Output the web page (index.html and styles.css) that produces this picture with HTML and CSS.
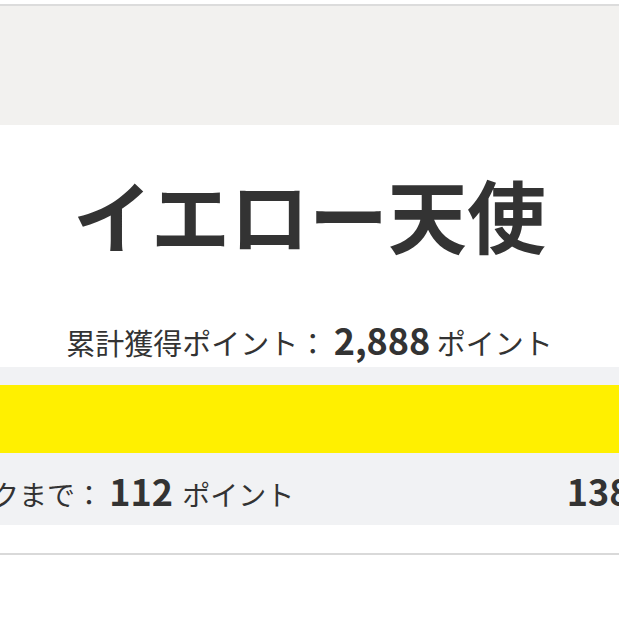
FILE: index.html
```html
<!DOCTYPE html>
<html lang="ja">
<head>
<meta charset="utf-8">
<link rel="stylesheet" href="styles.css">
</head>
<body>
<div class="page">
  <div class="hero"></div>
  <section class="card">
    <h1 class="title">イエロー天使</h1>
    <p class="total">累計獲得ポイント： <strong class="num">2,888</strong> ポイント</p>
  </section>
  <section class="progress">
    <div class="bar"><div class="fill" style="width:100%"></div></div>
    <div class="row">
      <span class="label">次のランクまで： <strong class="num">112</strong> <span class="unit">ポイント</span></span>
      <span class="label next"><strong class="num">1388</strong> <span class="unit">ポイント</span></span>
    </div>
  </section>
  <div class="gap"></div>
  <hr class="rule">
</div>
</body>
</html>
```
FILE: styles.css
```css
html, body {
  margin: 0;
  padding: 0;
  background: #ffffff;
  overflow: hidden;
}
body {
  font-family: "Noto Sans CJK JP", "Noto Sans", sans-serif;
  color: #333333;
}
.page {
  width: 861px;
  margin-left: -121px;
}
.hero {
  margin-top: 4px;
  height: 119px;
  border-top: 2px solid #dcdcdc;
  background: #f2f1ef;
}
.card {
  padding-top: 42px;
  text-align: center;
}
.title {
  margin: 0;
  font-size: 79px;
  line-height: 94px;
  font-weight: 700;
  color: #333333;
}
.total {
  margin: 58px 0 0;
  font-size: 29px;
  line-height: 40px;
  height: 40px;
  font-weight: 400;
}
.num {
  font-size: 36px;
  font-weight: 700;
  line-height: 40px;
}
.progress {
  margin-top: 8px;
  background: #f1f2f4;
  padding: 18px 0 15px;
}
.bar {
  height: 68px;
}
.fill {
  height: 100%;
  background: #fff000;
}
.row {
  margin-top: 17px;
  display: flex;
  justify-content: space-between;
  font-size: 28px;
  line-height: 40px;
  height: 40px;
}
.unit {
  margin-left: 3px;
}
.next {
  margin-right: -33px;
}
.gap {
  height: 28px;
}
.rule {
  margin: 0;
  border: 0;
  height: 2px;
  background: #d9d9d9;
}
```
